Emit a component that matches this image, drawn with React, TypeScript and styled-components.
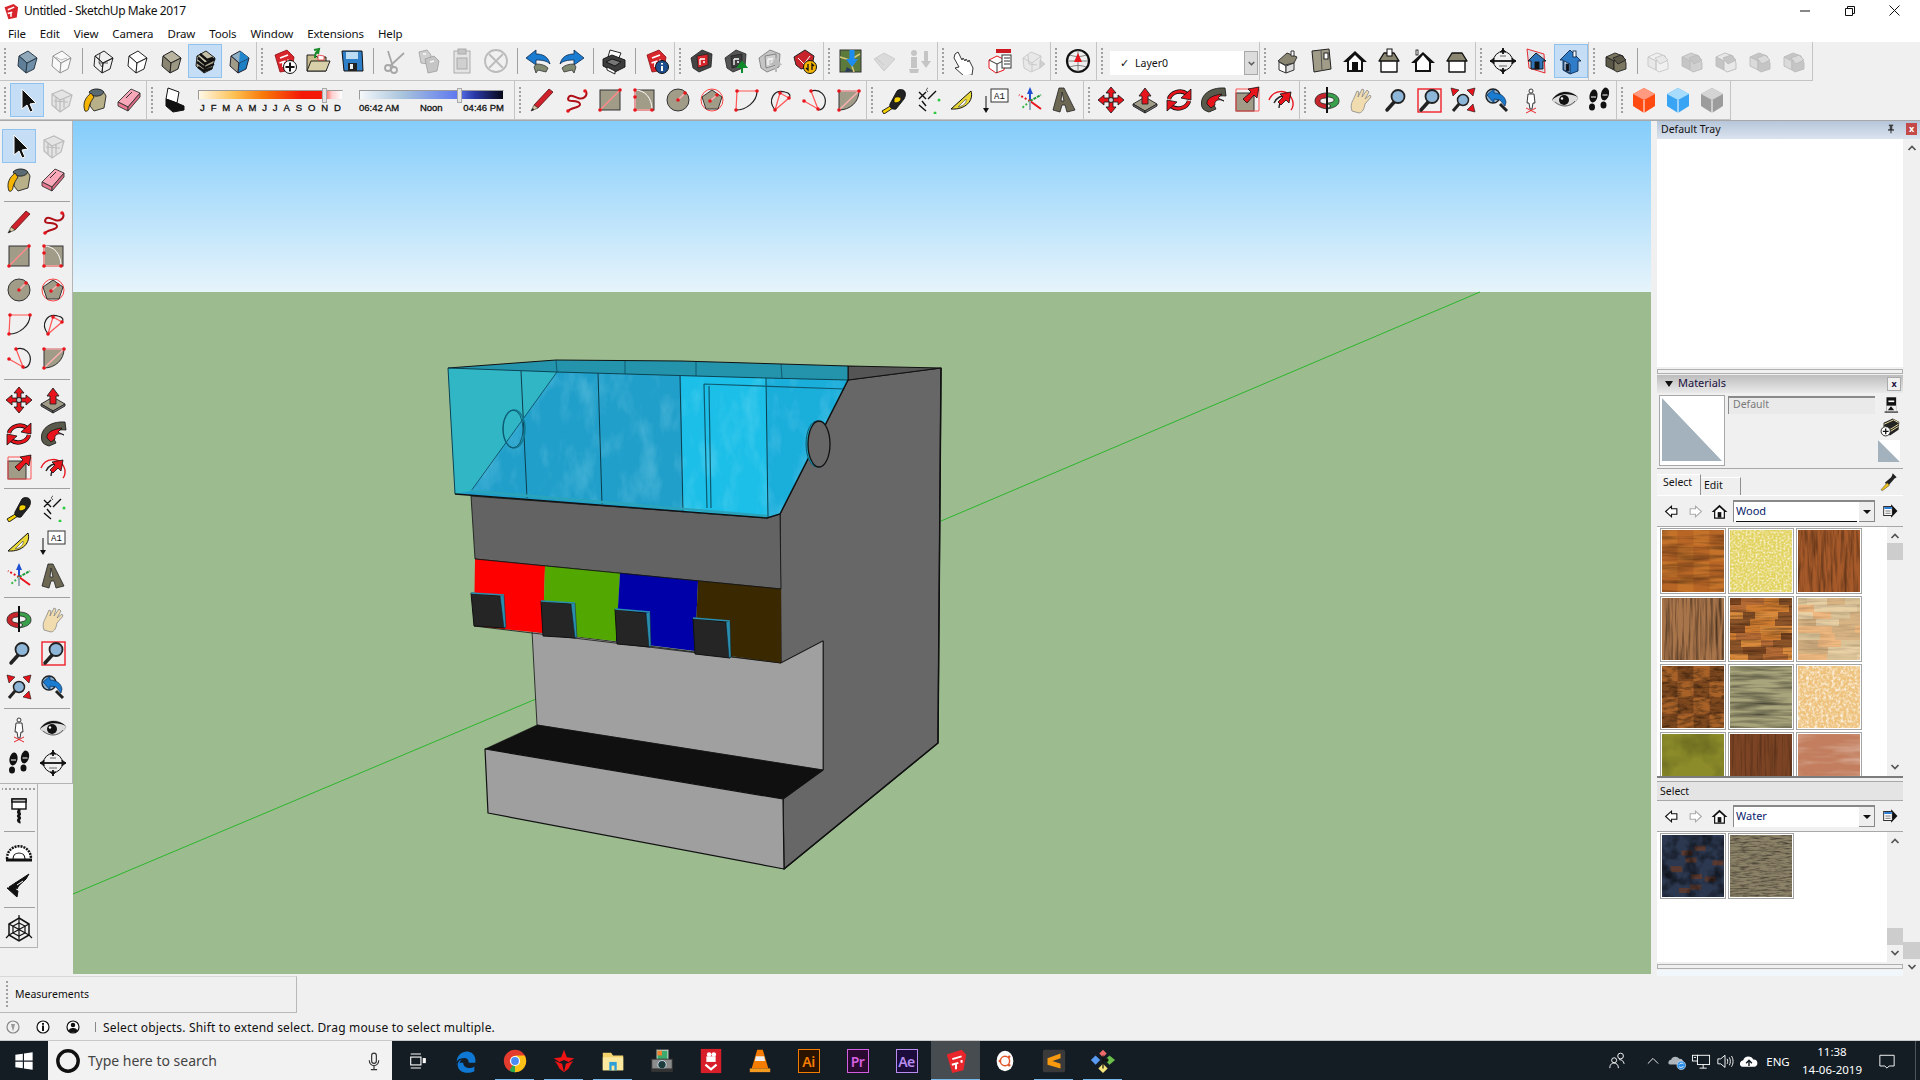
import React, { ReactNode } from 'react'
import styled, { createGlobalStyle } from 'styled-components'

const RED = '#e8141c'
const TAN = '#a09c88'
const UI_FONT = '"Noto Sans", "Open Sans", sans-serif'

const GlobalStyle = createGlobalStyle`
  html, body { margin: 0; padding: 0; background: #f0f0f0; }
  body { font-family: ${UI_FONT}; color: #111; }
  * { box-sizing: border-box; }
`

// drawing helpers
const Dot = ({ x, y }: { x: number; y: number }) => <circle cx={x} cy={y} r="1.8" fill={RED} />

const cube = (t: string, l: string, r: string, s = '#222') => (
  <g stroke={s} strokeWidth="1" strokeLinejoin="round">
    <polygon points="6,9 15,4 24,11 14,16" fill={t} />
    <polygon points="6,9 14,16 13,26 5,19" fill={l} />
    <polygon points="14,16 24,11 21,22 13,26" fill={r} />
  </g>
)

const suPaper = (
  <g>
    <polygon points="5,8 17,3 24,10 22,23 10,25" fill="#d8252c" stroke="#8a0f14" strokeWidth=".8" />
    <path d="M10 11l8-3M9.5 16l6-2M13 15v5M18 12.5v3" stroke="#fff" strokeWidth="1.8" fill="none" />
  </g>
)

const roundBadge = (fill: string, inner: ReactNode) => (
  <g>
    <circle cx="20" cy="20" r="6.5" fill={fill} stroke="#111" strokeWidth="1" />
    {inner}
  </g>
)

const suTool = (a: string, b: string) => (
  <g>
    <polygon points="3,11 14,3 24,7 23,20 11,25 5,21" fill={a} stroke="#222" strokeWidth=".8" />
    <polygon points="9,9 20,7 20,18 10,21" fill={b} stroke="#222" strokeWidth=".8" />
    <path d="M12 12h5M12 12v6M15 15h2" stroke="#fff" strokeWidth="1.3" />
  </g>
)

const houseBody = (wall: string, roof: string) => (
  <g stroke="#111" strokeWidth="1.4" strokeLinejoin="round">
    <polygon points="6,13 22,13 22,25 6,25" fill={wall} />
    <polygon points="4,14 9,6 19,6 24,14" fill={roof} />
  </g>
)

const solidShape = (a: string, b: string, s: string) => (
  <g stroke={s} strokeWidth=".9" strokeLinejoin="round">
    <polygon points="4,10 13,6 21,9 12,14" fill={a} />
    <polygon points="4,10 12,14 12,23 4,19" fill={b} />
    <polygon points="12,14 21,9 24,16 24,22 15,25 12,23" fill={a} />
    <polygon points="11,11 19,8 24,13 16,17" fill={b} />
  </g>
)

const footprint = (
  <g fill="#111">
    <ellipse cx="8.5" cy="10" rx="4" ry="6.5" transform="rotate(10 8.5 10)" />
    <ellipse cx="7" cy="21" rx="3" ry="3.5" />
    <ellipse cx="20" cy="8" rx="4" ry="6.5" transform="rotate(12 20 8)" />
    <ellipse cx="18.5" cy="19" rx="3" ry="3.5" />
    <path d="M6 11h5M17.5 9h5" stroke="#fff" strokeWidth="1" />
  </g>
)

const magnifier = (
  <g>
    <path d="M15 14L6 24" stroke="#222" strokeWidth="3.5" strokeLinecap="round" />
    <circle cx="17" cy="10.5" r="6.5" fill="#8eb6d8" stroke="#222" strokeWidth="1.8" />
  </g>
)

const GLYPHS: Record<string, ReactNode> = {
  iso: cube('#8fa9bb', '#5f7f99', '#6f8fa8', '#2a3a48'),
  xray: (
    <g>
      {cube('#fff', '#fff', '#fff', '#555')}
      <path d="M9 10l5 3 6-2" stroke="#999" fill="none" />
    </g>
  ),
  wire: (
    <g>
      {cube('none', 'none', 'none', '#222')}
      <path d="M11 6l-1 10 3 4M10 16l9 0" stroke="#333" fill="none" strokeWidth=".8" />
    </g>
  ),
  hidden: cube('#fff', '#fff', '#fff'),
  shaded: cube('#b8b4a0', '#8a8672', '#9c9884'),
  tex: (
    <g>
      {cube('#c4c0a8', '#b8b49c', '#a8a48c')}
      <path d="M7 11l7 6 10-5M6 15l8 6 9-4M7 20l6 4 8-3M9 7l7 6 6-2" stroke="#111" strokeWidth="2.4" fill="none" />
    </g>
  ),
  mono: (
    <g>
      {cube('#8fb0c4', '#a09c88', '#1d7fc4', '#223')}
      <polygon points="15,4 24,11 14,16" fill="#2286cc" />
    </g>
  ),
  newdoc: (
    <g>
      {suPaper}
      {roundBadge('#fff', <path d="M20 15.5v9M15.5 20h9" stroke="#111" strokeWidth="2" />)}
    </g>
  ),
  open: (
    <g>
      <path d="M3 8h8l2 2h9v14H3z" fill="#c8bc8c" stroke="#222" />
      <path d="M3 24l4-10h19l-4 10z" fill="#d8d0a8" stroke="#222" />
      <path d="M11 11c0-4 1-6 3-7M10 3l5-1-1 5" stroke="#1a8a2a" strokeWidth="2" fill="none" />
      <path d="M14 8l6 1v4h-6z" fill="#fff" stroke={RED} strokeWidth=".7" />
    </g>
  ),
  save: (
    <g>
      <polygon points="4,4 24,4 25,24 6,24" fill="#2f7fc8" stroke="#111" />
      <rect x="8" y="5" width="12" height="7" fill="#bcdcf4" />
      <rect x="10" y="16" width="9" height="8" fill="#222" />
      <rect x="12" y="17" width="3" height="5" fill="#eee" />
    </g>
  ),
  cut: (
    <g fill="none" stroke="#777" strokeWidth="1.8">
      <circle cx="8" cy="21" r="3" />
      <circle cx="14" cy="23" r="3" />
      <path d="M10 19L24 6M13 20L8 4" />
    </g>
  ),
  copy: (
    <g stroke="#666" strokeWidth=".8">
      <polygon points="5,5 13,3 17,8 15,17 7,16" fill="#bbb" />
      <polygon points="11,12 20,9 25,14 23,24 14,26" fill="#aaa" />
      <path d="M9 7l3 0M16 15l4-1" stroke="#fff" strokeWidth="1.4" />
    </g>
  ),
  paste: (
    <g stroke="#777" strokeWidth=".9">
      <rect x="6" y="4" width="16" height="22" fill="#ddd" />
      <rect x="10" y="2" width="8" height="5" fill="#aaa" />
      <rect x="9" y="11" width="10" height="11" fill="#bbb" />
    </g>
  ),
  erase: (
    <g fill="none" stroke="#999" strokeWidth="1.8">
      <circle cx="14" cy="14" r="11" />
      <path d="M7 7l14 14M21 7L7 21" />
    </g>
  ),
  undo: (
    <g>
      <path d="M2 11L12 3v4c6 0 12 2 14 10-3-3-7-4-14-4v5z" fill="#1a7cd0" stroke="#0a2a50" strokeWidth=".8" />
      <path d="M12 17c5 0 9 1 12 4l-2 4-8-2-2 3-2-6z" fill="#7f8a70" stroke="#333" strokeWidth=".8" />
    </g>
  ),
  redo: (
    <g transform="matrix(-1 0 0 1 28 0)">
      <path d="M2 11L12 3v4c6 0 12 2 14 10-3-3-7-4-14-4v5z" fill="#1a7cd0" stroke="#0a2a50" strokeWidth=".8" />
      <path d="M12 17c5 0 9 1 12 4l-2 4-8-2-2 3-2-6z" fill="#7f8a70" stroke="#333" strokeWidth=".8" />
    </g>
  ),
  print: (
    <g stroke="#111" strokeWidth=".9">
      <polygon points="10,3 21,6 18,13 8,10" fill="#fff" />
      <polygon points="3,12 12,8 25,13 25,20 15,25 3,19" fill="#3c3c3c" />
      <polygon points="6,15 12,12 21,15 15,19" fill="#777" />
      <polygon points="7,20 15,24 15,27 7,23" fill="#fff" />
    </g>
  ),
  model: (
    <g>
      {suPaper}
      {roundBadge('#1d4f8f', <path d="M20 16v1.5M20 19v5" stroke="#fff" strokeWidth="2" />)}
    </g>
  ),
  wh1: suTool('#444', '#d8252c'),
  wh2: (
    <g>
      {suTool('#555', '#3c3c3c')}
      <path d="M20 26v-7M16 20l4-5 4 5z" stroke="#0f8a2a" fill="#0f8a2a" strokeWidth="2" />
    </g>
  ),
  wh3: (
    <g>
      {suTool('#aaa', '#bbb')}
      <path d="M20 25v-9M16 17l4-5 4 5z" stroke="#999" fill="#999" strokeWidth="2" />
    </g>
  ),
  wh4: (
    <g>
      <polygon points="4,10 15,3 24,9 22,19 11,22 6,18" fill="#c8242c" stroke="#222" />
      <path d="M8 11l6 6 6-8" stroke="#fff" fill="none" />
      {roundBadge('#f4b400', <path d="M18 17v6l-2-2M22 23v-6l2 2" stroke="#111" strokeWidth="1.3" fill="none" />)}
    </g>
  ),
  terrain: (
    <g>
      <rect x="3" y="3" width="21" height="22" fill="#5c7a3c" stroke="#333" />
      <path d="M3 10l10 3 4 12M13 13l10-6" stroke="#d8c878" strokeWidth="1.5" fill="none" />
      <path d="M10 20l6 4-8 1z" fill="#2a3a5c" />
      <path d="M15 3v10" stroke="#1d8cf0" strokeWidth="5" />
      <polygon points="9,12 21,12 15,20" fill="#1d8cf0" />
    </g>
  ),
  photo: (
    <g fill="#ccc" stroke="#aaa" strokeWidth=".8">
      <polygon points="3,12 13,6 24,12 13,24" />
      <path d="M5 11l8 7" fill="none" />
    </g>
  ),
  pindown: (
    <g fill="#aaa">
      <circle cx="9" cy="6" r="3" />
      <rect x="6" y="10" width="6" height="11" />
      <polygon points="4,22 14,22 13,26 5,26" />
      <path d="M19 4h4v10h3l-5 7-5-7h3z" />
    </g>
  ),
  handPoint: (
    <path d="M7 5l4 8 1-2 2 3 1-2 2 3 1-2 4 8-1 7-8 1-9-8 4-1-5-9 1-4z" fill="#fff" stroke="#222" strokeWidth=".9" />
  ),
  report: (
    <g>
      <polygon points="4,13 12,9 20,13 19,23 11,26 4,21" fill="#fff" stroke={RED} />
      <path d="M4 13l8 4 8-4M12 17v9" stroke="#333" fill="none" />
      <rect x="11" y="2" width="15" height="4" fill="#cc1a22" />
      <rect x="17" y="8" width="9" height="13" fill="#fff" stroke="#333" />
      <path d="M19 11h6M19 14h6M19 17h6" stroke="#333" />
    </g>
  ),
  reportDim: (
    <g fill="#e4e4e4" stroke="#aaa" strokeWidth=".9">
      <polygon points="4,11 12,5 22,9 21,21 12,25 5,21" />
      <path d="M4 11l9 5 9-7M13 16v9M9 8l1 9 8 1" fill="none" />
      <path d="M21 13l5 4-5 4z" fill="#bbb" />
    </g>
  ),
  globe: (
    <g>
      <circle cx="14" cy="14" r="11" fill="#eee" stroke="#111" strokeWidth="2.2" />
      <path d="M4 14h20M14 3v22M6 8c5 2 11 2 16 0M6 20c5-2 11-2 16 0" stroke="#666" fill="none" strokeWidth=".8" />
      <polygon points="14,6 18,15 10,15" fill={RED} />
    </g>
  ),
  houseIso: (
    <g stroke="#333" strokeWidth="1" strokeLinejoin="round">
      <polygon points="5,14 14,6 24,10 21,16 12,18" fill="#8a8672" />
      <polygon points="6,15 13,19 13,26 6,23" fill="#fff" />
      <polygon points="13,19 21,16 21,23 13,26" fill="#ddd" />
      <rect x="18" y="4" width="3" height="5" fill="#fff" />
    </g>
  ),
  houseTop: (
    <g stroke="#222" strokeWidth="1">
      <polygon points="5,4 22,2 24,22 7,25" fill={TAN} />
      <path d="M14 3l1 21" stroke="#555" />
      <rect x="17" y="6" width="4" height="6" fill="#fff" />
    </g>
  ),
  houseFront: (
    <g>
      <polygon points="14,4 26,15 22,15 22,25 6,25 6,15 2,15" fill="#111" />
      <polygon points="14,8 20,14 20,23 8,23 8,14" fill="#fff" />
      <rect x="11" y="15" width="6" height="8" fill="#111" />
    </g>
  ),
  houseRight: (
    <g>
      {houseBody('#fff', '#8a8672')}
      <rect x="12" y="2" width="5" height="7" fill="#fff" stroke="#111" />
    </g>
  ),
  houseBack: (
    <g>
      <polygon points="14,5 26,16 22,16 22,25 6,25 6,16 2,16" fill="#111" />
      <polygon points="14,8 20,15 20,23 8,23 8,15" fill="#fff" />
      <rect x="7" y="3" width="2" height="5" fill="#fff" stroke="#111" strokeWidth=".8" />
    </g>
  ),
  houseLeft: houseBody('#fff', '#8a8672'),
  views: (
    <g fill="none" stroke="#111">
      <circle cx="14" cy="14" r="9.5" strokeWidth="1" />
      <path d="M1 14h26" strokeWidth="1.8" />
      <path d="M14 1v6M14 21v6" strokeWidth="1.8" />
      <path d="M1 14l4-3v6zM27 14l-4-3v6zM14 2l-3 3h6zM14 26l-3-3h6z" fill="#111" strokeWidth=".6" />
      <path d="M11 9h6M10 19h8" stroke="#666" />
    </g>
  ),
  camPara: (
    <g stroke="#111" strokeWidth=".9">
      <polygon points="4,2 21,7 22,26 6,21" fill="#d8e0e8" stroke={RED} />
      <polygon points="13,6 23,14 20,14 20,22 8,22 8,14 5,14" fill="#2f74b8" />
      <rect x="12" y="15" width="4" height="7" fill="#111" />
    </g>
  ),
  camPersp: (
    <g stroke="#0f2a50" strokeWidth=".9">
      <polygon points="13,3 24,14 21,14 21,24 13,27 6,23 6,13 3,13" fill="#2f7cc8" />
      <polygon points="7,14 13,17 13,26 7,23" fill="#e4eef8" />
      <rect x="9" y="17" width="3" height="7" fill="#111" />
      <rect x="16" y="4" width="3" height="6" fill="#fff" />
    </g>
  ),
  solid: solidShape('#7a7660', '#5c5848', '#222'),
  solidA: solidShape('none', '#e4e4e4', '#aaa'),
  solidB: solidShape('#bbb', '#aaa', '#999'),
  solidC: solidShape('#e4e4e4', '#aaa', '#999'),
  solidD: solidShape('#aaa', '#ccc', '#999'),
  select: <path d="M9 3v20l5-4 3 7 3-1-3-7 6-1z" fill="#111" stroke="#fff" strokeWidth="1" />,
  component: (
    <g fill="none" stroke="#999" strokeWidth="1.2">
      <polygon points="5,8 15,4 25,9 22,20 13,26 5,19" fill="#ddd" />
      <path d="M5 8l8 6 12-5M13 14v12M9 11v11M17 12v10M7 15l14 1" />
    </g>
  ),
  bucket: (
    <g stroke="#222" strokeWidth=".9">
      <path d="M9 8C12 1 22 2 25 10l-2 12-10 3-4-5z" fill="#b8b088" />
      <path d="M8 6c3-4 12-4 15 0-2 5-12 6-15 0z" fill="#5a6a72" />
      <path d="M10 7C5 11 1 17 4 25c2 1 4-1 4-4 1-4 3-7 5-10z" fill="#f4b400" />
    </g>
  ),
  eraser: (
    <g stroke="#333" strokeWidth=".9" strokeLinejoin="round">
      <polygon points="3,16 16,3 25,7 13,21" fill="#f8a8b8" />
      <polygon points="3,16 13,21 13,25 3,20" fill="#ea7890" />
      <polygon points="13,21 25,7 25,11 13,25" fill="#d86880" />
      <path d="M11 12l6-6" stroke="#333" strokeWidth="1" />
    </g>
  ),
  shadow: (
    <g stroke="#111">
      <polygon points="8,2 19,6 17,17 6,13" fill="#fff" />
      <polygon points="6,13 17,17 24,20 24,24 13,26 6,20" fill="#111" />
    </g>
  ),
  pencil: (
    <g>
      <polygon points="21,3 25,6 10,22 6,19" fill="#d0202a" stroke="#511" strokeWidth=".8" />
      <polygon points="6,19 10,22 3,25" fill="#d8c8a0" stroke="#333" strokeWidth=".6" />
      <polygon points="3,25 5,22 6,24" fill="#111" />
    </g>
  ),
  freehand: (
    <g>
      <path d="M24 5c2 5-3 9-8 7-5-2-9-4-10 1 0 4 10 0 12 5 1 4-9 3-12 7" stroke="#b01018" strokeWidth="2" fill="none" />
      <Dot x={23} y={5} />
      <Dot x={6} y={25} />
    </g>
  ),
  rect: (
    <g>
      <rect x="4" y="4" width="20" height="20" fill={TAN} stroke="#333" />
      <path d="M4 24L24 4" stroke="#ff8a8a" strokeWidth="1.4" />
      <Dot x={24} y={4} />
      <Dot x={4} y={24} />
    </g>
  ),
  rotrect: (
    <g>
      <rect x="5" y="4" width="19" height="20" fill={TAN} stroke="#333" />
      <path d="M5 4c10 0 17 8 17 20H5z" fill={TAN} stroke="#fff" strokeWidth="1" />
      <path d="M5 4v20h17" stroke="#ff6a6a" strokeWidth="1" fill="none" />
      <Dot x={5} y={4} />
      <Dot x={5} y={11} />
      <Dot x={5} y={24} />
      <Dot x={22} y={24} />
    </g>
  ),
  circle: (
    <g>
      <circle cx="14" cy="14" r="11" fill={TAN} stroke="#333" />
      <path d="M14 14l7-7" stroke="#ffb0b0" strokeWidth="1.4" />
      <Dot x={14} y={14} />
      <Dot x={21} y={7} />
    </g>
  ),
  polygon: (
    <g>
      <circle cx="14" cy="14" r="11" fill="none" stroke="#f44" />
      <polygon points="14,4 24,11 20,23 8,23 4,11" fill={TAN} stroke="#333" />
      <path d="M12 15l7-6" stroke="#ffb0b0" strokeWidth="1.4" />
      <Dot x={12} y={15} />
      <Dot x={19} y={9} />
    </g>
  ),
  arc: (
    <g fill="none">
      <path d="M4 24L5 5h20" stroke="#f55" strokeWidth="1.2" />
      <path d="M4 24c10 0 21-8 21-19" stroke="#222" strokeWidth="1.2" />
      <Dot x={5} y={5} />
      <Dot x={25} y={5} />
      <Dot x={4} y={24} />
    </g>
  ),
  arc2: (
    <g fill="none">
      <path d="M9 24C1 14 8 3 19 6c5 1 6 4 4 6" stroke="#222" strokeWidth="1.2" />
      <path d="M9 24l5-17M9 24l14-12L14 7" stroke="#f55" strokeWidth="1.2" />
      <Dot x={9} y={24} />
      <Dot x={23} y={12} />
      <Dot x={14} y={7} />
    </g>
  ),
  arc3: (
    <g fill="none">
      <path d="M11 5c9-3 16 5 14 13-1 4-3 6-7 6" stroke="#222" strokeWidth="1.2" />
      <path d="M4 15l14 8L11 5" stroke="#f55" strokeWidth="1.2" />
      <Dot x={4} y={15} />
      <Dot x={18} y={23} />
      <Dot x={11} y={5} />
    </g>
  ),
  pie: (
    <g>
      <path d="M5 5h20C25 16 16 24 5 24z" fill={TAN} stroke="#333" />
      <path d="M5 24L25 5M5 5h20" stroke="#ffb0b0" strokeWidth="1.4" />
      <Dot x={5} y={5} />
      <Dot x={25} y={5} />
      <Dot x={5} y={24} />
    </g>
  ),
  tape: (
    <g stroke="#111" strokeWidth=".9">
      <path d="M2 25l10-6 1 3-9 6z" fill="#f4d000" />
      <path d="M10 18L17 5c2-2 7-2 8 1s0 5-1 7l-8 10c-4 1-7-2-6-5z" fill="#222" />
      <path d="M14 13c1-3 7-3 7 0s-6 5-7 3z" fill="#f4d000" />
    </g>
  ),
  dimension: (
    <g fill="none" stroke="#111" strokeWidth="1.4">
      <path d="M5 6l7 7M5 13l7-7M14 13l8-8M5 19l7 6M8 15l4 5" />
      <path d="M14 6c-2-2-2-3 0-4" strokeWidth=".8" />
      <circle cx="25" cy="14" r="1.5" fill="#2dcc40" stroke="none" />
      <circle cx="21" cy="27" r="1.5" fill="#2dcc40" stroke="none" />
    </g>
  ),
  protractor: (
    <g stroke="#111" strokeWidth="1">
      <path d="M3 23L23 5c3 9-5 19-20 18z" fill="#e8d838" />
      <path d="M10 21l8-8c1 3-2 7-8 8z" fill="#fff" stroke="#555" strokeWidth=".7" />
    </g>
  ),
  textTool: (
    <g>
      <rect x="9" y="3" width="17" height="13" fill="#fff" stroke="#333" />
      <text x="17.5" y="13" fontFamily="Liberation Mono, monospace" fontSize="9" textAnchor="middle" fill="#111">A1</text>
      <path d="M4 10v13" stroke="#111" strokeWidth="1" />
      <polygon points="1,22 7,22 4,27" fill="#111" />
    </g>
  ),
  axes: (
    <g strokeWidth="2" fill="none">
      <path d="M14 15V4" stroke="#1d4fd0" />
      <path d="M14 15l11-6" stroke="#1f9a3a" strokeDasharray="3 1" />
      <path d="M14 15l11 8" stroke={RED} />
      <path d="M14 15l-11-6" stroke={RED} strokeDasharray="2 2" />
      <path d="M14 15l-9 8" stroke="#3cb84c" strokeDasharray="2 2" />
      <path d="M14 15v9" stroke="#9ab" />
      <polygon points="14,1 11,8 17,8" fill="#1d4fd0" />
    </g>
  ),
  text3d: (
    <g stroke="#222" strokeWidth=".8">
      <polygon points="14,2 9,2 3,24 10,26 12,19 15,19 17,26 25,24" fill="#6c6854" />
      <polygon points="12,6 14,15 11,15" fill="#eee" />
    </g>
  ),
  move: (
    <g fill={RED} stroke="#111" strokeWidth=".8">
      <polygon points="14,1 19,7 16,7 16,12 12,12 12,7 9,7" />
      <polygon points="14,27 19,21 16,21 16,16 12,16 12,21 9,21" />
      <polygon points="1,14 7,9 7,12 12,12 12,16 7,16 7,19" />
      <polygon points="27,14 21,9 21,12 16,12 16,16 21,16 21,19" />
      <circle cx="14" cy="14" r="2.5" fill="#ccc" />
    </g>
  ),
  push: (
    <g stroke="#222" strokeWidth=".9" strokeLinejoin="round">
      <polygon points="2,18 14,11 26,18 14,25" fill={TAN} />
      <polygon points="2,18 14,25 14,27 2,20" fill="#666" />
      <polygon points="14,25 26,18 26,20 14,27" fill="#777" />
      <polygon points="14,2 20,10 17,10 17,18 11,18 11,10 8,10" fill={RED} />
    </g>
  ),
  rotate: (
    <g fill="none">
      <path d="M4 13C6 6 16 3 22 8" stroke="#111" strokeWidth="4.4" />
      <path d="M4 13C6 6 16 3 22 8" stroke={RED} strokeWidth="2.8" />
      <path d="M24 15c-2 7-12 10-18 5" stroke="#111" strokeWidth="4.4" />
      <path d="M24 15c-2 7-12 10-18 5" stroke={RED} strokeWidth="2.8" />
      <polygon points="26,3 26,14 16,12" fill={RED} stroke="#111" strokeWidth=".8" />
      <polygon points="2,25 2,14 12,16" fill={RED} stroke="#111" strokeWidth=".8" />
    </g>
  ),
  follow: (
    <g stroke="#111" strokeWidth=".8">
      <path d="M3 21C0 10 10 1 26 2l1 8c-8-1-14 2-13 7l3 6-7 3c-3-1-6-2-7-5z" fill="#5a5a4c" />
      <path d="M8 18c-1-6 7-9 15-10l-4 4 6 3c-6-3-10 0-9 4l-4 3z" fill={RED} />
    </g>
  ),
  scale: (
    <g>
      <rect x="3" y="7" width="18" height="18" fill={TAN} stroke="#333" />
      <path d="M3 3h23v22H3z" fill="none" stroke="#f55" strokeWidth="1" />
      <polygon points="26,1 24,12 21,9 14,17 10,13 18,6 15,3" fill={RED} stroke="#111" strokeWidth=".8" />
    </g>
  ),
  offset: (
    <g fill="none">
      <path d="M2 14C6 4 20 2 25 13c2 4 1 9-1 11" stroke={RED} strokeWidth="1.4" />
      <path d="M7 17c3-6 8-8 11-6" stroke="#222" strokeWidth="1.4" />
      <path d="M12 22c0-4 2-6 4-7" stroke="#222" strokeWidth="1.4" />
      <polygon points="24,6 22,17 19,14 14,19 11,16 16,11 13,8" fill={RED} stroke="#111" strokeWidth=".8" />
    </g>
  ),
  orbit: (
    <g stroke="#222" strokeWidth=".8">
      <path d="M14 7C7 7 2 10 2 15s6 7 12 8v-5c-4 0-7-1-7-3s2-3 7-3z" fill="#c8242c" />
      <path d="M14 7c7 0 12 3 12 8s-6 7-12 8l4-3-4-3c4 0 7-1 7-3s-3-3-7-3z" fill="#3aa04c" />
      <path d="M14 1v26" stroke="#111" strokeWidth="2" />
    </g>
  ),
  pan: (
    <path d="M5 25c-2-6 0-9 2-13l3-7 2 1-1 5 4-8 2 1-2 7 5-7 2 2-4 7 5-4 1 2-6 7c-1 5-2 8-6 9z" fill="#f0dcae" stroke="#888" strokeWidth=".8" />
  ),
  zoom: magnifier,
  zoomWin: (
    <g>
      <rect x="3" y="3" width="23" height="23" fill="none" stroke="#ee2028" strokeWidth="1.4" />
      {magnifier}
    </g>
  ),
  zoomExt: (
    <g>
      <path d="M10 18l-6 7" stroke="#222" strokeWidth="3" />
      <circle cx="14" cy="14" r="5.5" fill="#8eb6d8" stroke="#222" strokeWidth="1.5" />
      <g fill={RED} stroke="#111" strokeWidth=".6">
        <polygon points="2,2 10,4 4,10" />
        <polygon points="26,2 24,10 18,4" />
        <polygon points="26,26 18,24 24,18" />
      </g>
    </g>
  ),
  zoomPrev: (
    <g>
      <path d="M17 18l7 7" stroke="#222" strokeWidth="3" />
      <circle cx="10" cy="10" r="7" fill="#8eb6d8" stroke="#222" strokeWidth="1.4" />
      <path d="M4 9l7-6v4c6 0 11 3 12 9l-1 4-5-6-6-1v4z" fill="#1a7cd0" stroke="#0a2a50" strokeWidth=".7" />
    </g>
  ),
  person: (
    <g stroke="#222" strokeWidth=".9" fill="#fff">
      <circle cx="14" cy="5" r="2" />
      <path d="M11 8h6l1 9h-2l-1 6h-2l-1-6h-2z" />
      <path d="M9 27l10-5M19 27L9 22" stroke={RED} />
    </g>
  ),
  eye: (
    <g>
      <path d="M1 14C7 4 20 3 27 12c-4 9-17 11-26 2z" fill="#ddd" stroke="#888" strokeWidth=".5" />
      <path d="M1 14C7 4 19 4 27 11c-8-3-16-5-26 3z" fill="#111" />
      <circle cx="13" cy="14" r="5" fill="#111" />
      <circle cx="11" cy="12.5" r="1.2" fill="#fff" />
      <path d="M4 16c6 5 14 6 20-1" stroke="#666" fill="none" />
    </g>
  ),
  walk: footprint,
  cubeRed: (
    <g>
      <polygon points="14,2 25,8 25,20 14,27 3,20 3,8" fill="#ff4a12" />
      <polygon points="14,2 25,8 14,14 3,8" fill="#ff9a80" />
      <path d="M14 14v13" stroke="#fff" strokeWidth="1" />
    </g>
  ),
  cubeBlue: (
    <g>
      <polygon points="14,2 25,8 25,20 14,27 3,20 3,8" fill="#3aa4f4" />
      <polygon points="14,2 25,8 14,14 3,8" fill="#a8dcfc" />
      <path d="M14 14v13" stroke="#fff" strokeWidth="1" />
    </g>
  ),
  cubeGray: (
    <g>
      <polygon points="14,2 25,8 25,20 14,27 3,20 3,8" fill="#9c9c9c" />
      <polygon points="14,2 25,8 14,14 3,8" fill="#d4d4d4" />
      <path d="M14 14v13" stroke="#fff" strokeWidth="1" />
    </g>
  ),
  sandbox: (
    <g stroke="#111" fill="#fff" strokeWidth="1.4">
      <rect x="7" y="2" width="14" height="10" />
      <rect x="7" y="2" width="14" height="3" fill="#bbb" />
      <path d="M14 12v2c-2 2 2 2 0 4s2 2 0 4 1 2 0 4" fill="none" strokeWidth="3" />
    </g>
  ),
  protractorBlack: (
    <g fill="none" stroke="#111">
      <path d="M2 22C2 5 26 5 26 22" fill="#fff" strokeWidth="2.5" strokeDasharray="2 1" />
      <path d="M8 22c0-8 12-8 12 0" strokeWidth="1.2" />
      <path d="M1 23h26" strokeWidth="3" />
    </g>
  ),
  caliper: (
    <g stroke="#111" fill="#111">
      <path d="M4 16l20-13-3 5-13 12z" />
      <path d="M2 17l10 9 1-6-5-3zM10 12l2 6 3-6z" />
      <path d="M12 14l6-4" stroke="#fff" strokeWidth="1" />
    </g>
  ),
  web: (
    <g fill="none" stroke="#111" strokeWidth="1.2">
      <polygon points="14,3 24,9 24,20 14,26 4,20 4,9" strokeWidth="1.5" />
      <polygon points="14,8 20,11 20,18 14,21 8,18 8,11" />
      <path d="M14 3v23M4 9l20 11M24 9L4 20M14 0v3M1 23l3-3M27 23l-3-3" />
    </g>
  ),
  eyedropper: (
    <g>
      <path d="M20 3l5 5-3 2-1 1-7 8-4-4 8-7 1-2z" fill="#222" />
      <path d="M13 15l3 3-9 7-2-1z" fill="#f0c020" stroke="#333" strokeWidth=".6" />
    </g>
  ),
  navBack: <polygon points="3,14 14,4 14,9 24,9 24,19 14,19 14,24" fill="#fff" stroke="#111" strokeWidth="2" />,
  navNext: <polygon points="25,14 14,4 14,9 4,9 4,19 14,19 14,24" fill="#fff" stroke="#aaa" strokeWidth="2" />,
  navHome: (
    <g>
      <polygon points="14,3 27,15 23,15 23,26 5,26 5,15 1,15" fill="#111" />
      <polygon points="14,7 21,13 21,24 7,24 7,13" fill="#fff" />
      <rect x="11" y="15" width="6" height="9" fill="#111" />
    </g>
  ),
  details: (
    <g>
      <polygon points="16,2 27,14 16,26" fill="#111" />
      <rect x="3" y="6" width="15" height="16" fill="#fff" stroke="#111" strokeWidth="1.5" />
      <rect x="4" y="7" width="13" height="3.5" fill="#2f7fd8" />
      <path d="M6 14h9M6 18h9" stroke="#333" strokeWidth="1.2" />
    </g>
  ),
  materialCol: (
    <g>
      <rect x="7" y="2" width="15" height="23" fill="#111" />
      <rect x="10" y="7" width="9" height="2.5" fill="#fff" />
      <path d="M7 15h15v10H7z" fill="#eee" />
      <polygon points="14,16 19,22 9,22" fill="#111" />
      <rect x="4" y="24" width="21" height="2" fill="#333" />
    </g>
  ),
  materialAdd: (
    <g>
      <polygon points="5,8 18,2 27,7 26,18 14,26 5,20" fill="#222" />
      <path d="M6 10l13-6 7 4M6 13l9 4 11-7M6 16l9 4 11-7" stroke="#e8dca0" strokeWidth="1.4" fill="none" />
      <circle cx="8" cy="20" r="6.5" fill="#fff" stroke="#111" strokeWidth="1.2" />
      <path d="M8 16v8M4 20h8" stroke="#111" strokeWidth="1.8" />
    </g>
  ),
  statusPin: (
    <g>
      <circle cx="14" cy="14" r="12" fill="none" stroke="#888" strokeWidth="2.4" />
      <path d="M10 8h8l-2 8-2 7-2-7z" fill="#999" />
    </g>
  ),
  statusInfo: (
    <g>
      <circle cx="14" cy="14" r="12" fill="#fff" stroke="#111" strokeWidth="2.4" />
      <rect x="12" y="6" width="4" height="3.5" fill="#111" />
      <rect x="12" y="11" width="4" height="11" fill="#111" />
    </g>
  ),
  statusUser: (
    <g>
      <circle cx="14" cy="14" r="12" fill="#fff" stroke="#111" strokeWidth="2.4" />
      <circle cx="14" cy="10" r="4.5" fill="#111" />
      <path d="M5 23c1-6 5-7 9-7s8 1 9 7c-5 3-13 3-18 0z" fill="#111" />
    </g>
  ),
  windows: (
    <g fill="#fff">
      <polygon points="3,6 12.5,4.7 12.5,13.5 3,13.5" />
      <polygon points="14,4.5 25,3 25,13.5 14,13.5" />
      <polygon points="3,15 12.5,15 12.5,23.3 3,22" />
      <polygon points="14,15 25,15 25,25 14,23.5" />
    </g>
  ),
  cortana: <circle cx="14" cy="14" r="9.5" fill="none" stroke="#111" strokeWidth="3.2" />,
  mic: (
    <g fill="none" stroke="#333" strokeWidth="1.5">
      <rect x="11" y="4" width="6" height="13" rx="3" />
      <path d="M8 13c0 9 12 9 12 0M14 20v5M10 25h8" />
    </g>
  ),
  taskView: (
    <g fill="none" stroke="#fff" strokeWidth="1.4">
      <rect x="6" y="9" width="13" height="10" />
      <path d="M6 5h13M6 23h13" />
      <rect x="22" y="11" width="2.5" height="5" fill="#fff" />
    </g>
  ),
  edge: (
    <path d="M4 15C4 7 11 3 17 4c5 1 8 6 7 12H11c0 6 8 7 12 4v5c-8 4-18 1-18-7 0-3 2-5 5-6-2 1-2 2-3 4h10c0-4-3-6-6-5-5 0-8 3-7 8z" fill="#0f78d4" />
  ),
  chrome: (
    <g>
      <circle cx="14" cy="14" r="12" fill="#e33b2e" />
      <path d="M14 14L24.4 20A12 12 0 0 1 8 24.4z" fill="#2da94f" />
      <path d="M14 14V26A12 12 0 0 0 24.4 8H14z" fill="#fbc116" />
      <circle cx="14" cy="14" r="5.5" fill="#fff" />
      <circle cx="14" cy="14" r="4.2" fill="#4a8af4" />
    </g>
  ),
  redStar: (
    <g fill="#f01414">
      <polygon points="14,2 17,10 25,11 19,15 14,13 9,15 3,11 11,10" />
      <polygon points="4,14 12,17 14,26 9,22 7,18" />
      <polygon points="24,14 16,17 14,26 19,22 21,18" />
    </g>
  ),
  explorer: (
    <g>
      <path d="M3 5h9l2 3h11v16H3z" fill="#f4d26c" />
      <rect x="3" y="10" width="22" height="14" fill="#fbe9a0" />
      <rect x="10" y="15" width="8" height="9" fill="#2da0d8" />
      <rect x="12.5" y="19" width="3" height="5" fill="#fbe9a0" />
    </g>
  ),
  scanner: (
    <g>
      <rect x="8" y="2" width="13" height="12" fill="#fff" stroke="#666" />
      <rect x="9" y="3" width="11" height="9" fill="#3caa6c" />
      <rect x="9" y="3" width="5" height="5" fill="#f08030" />
      <rect x="3" y="12" width="22" height="13" fill="#8c8c8c" stroke="#333" />
      <circle cx="14" cy="18" r="4.5" fill="#1c3c3c" stroke="#cde" />
      <rect x="3" y="22" width="22" height="3" fill="#333" />
    </g>
  ),
  videoRed: (
    <g>
      <rect x="3" y="1" width="22" height="26" fill="#d81e28" />
      <circle cx="12" cy="7" r="2.5" fill="#fff" />
      <circle cx="17" cy="7" r="2.5" fill="#fff" />
      <rect x="9" y="9" width="10" height="6" fill="#fff" />
      <path d="M8 18l6 5 6-5" stroke="#fff" strokeWidth="2.4" fill="none" />
    </g>
  ),
  vlc: (
    <g>
      <polygon points="11,2 17,2 23,22 5,22" fill="#f47c00" />
      <polygon points="9.5,9 18.5,9 19.5,14 8.5,14" fill="#eee" />
      <rect x="3" y="22" width="22" height="4" fill="#f49a20" />
    </g>
  ),
  sketchTask: (
    <g>
      <polygon points="4,7 20,2 25,7 22,24 10,27" fill="#e8262c" />
      <path d="M10 12l10-3M9.5 18l7-2M14 17v6M20 13v3" stroke="#fff" strokeWidth="2.2" fill="none" />
    </g>
  ),
  ubuntu: (
    <g>
      <ellipse cx="14" cy="14" rx="9" ry="11" fill="#fff" />
      <circle cx="14" cy="14" r="5" fill="none" stroke="#e2552b" strokeWidth="1.6" />
      <circle cx="18.5" cy="9.5" r="1.4" fill="#e2552b" />
      <circle cx="8.5" cy="14" r="1.4" fill="#e2552b" />
      <circle cx="18.5" cy="18.5" r="1.4" fill="#e2552b" />
    </g>
  ),
  sublime: (
    <g>
      <rect x="2" y="2" width="24" height="24" rx="2" fill="#3a3a3a" />
      <path d="M7 11l14-5v5L7 16zM7 12l14 5v5L7 18z" fill="#f89a0f" />
    </g>
  ),
  gitApp: (
    <g>
      <polygon points="14,2 18,6 14,10 10,6" fill="#f06a6a" />
      <polygon points="6,8 11,13 6,18 1,13" fill="#5a9cf4" />
      <polygon points="21,8 27,13 21,18 16,13" fill="#6ac04a" />
      <polygon points="14,17 19,22 14,27 9,22" fill="#f4e27a" />
      <circle cx="18" cy="13" r="2" fill="#111" />
      <path d="M14 8v14M14 13h4" stroke="#111" strokeWidth="1.3" />
    </g>
  ),
  people: (
    <g fill="none" stroke="#fff" strokeWidth="1.3">
      <circle cx="19" cy="7" r="4" />
      <circle cx="10" cy="13" r="3.5" />
      <path d="M4 24c0-6 3-7 6-7s6 2 6 7M17 12c4 0 6 2 7 6" />
    </g>
  ),
  caretUp: <path d="M6 18l8-8 8 8" fill="none" stroke="#fff" strokeWidth="1.4" />,
  cloudSync: (
    <g>
      <path d="M4 19c-3 0-3-6 2-7 1-5 9-5 11-1 5-1 7 4 4 8z" fill="#aeb6bc" />
      <circle cx="20" cy="20" r="6" fill="#2a8ee8" stroke="#fff" strokeWidth=".8" />
      <path d="M17 19c1-2 4-3 6-1M23 21c-1 2-4 3-6 1" stroke="#fff" fill="none" strokeWidth="1.2" />
    </g>
  ),
  network: (
    <g fill="none" stroke="#fff" strokeWidth="1.3">
      <rect x="9" y="6" width="17" height="13" />
      <rect x="2" y="6" width="7" height="8" fill="#141d24" />
      <path d="M17 19v5M12 24h10M4 9h3" />
    </g>
  ),
  volume: (
    <g fill="none" stroke="#fff" strokeWidth="1.3">
      <path d="M4 11h4l6-5v17l-6-5H4z" />
      <path d="M17 11c1 2 1 5 0 7M20 9c2 3 2 8 0 11M23 7c3 4 3 11 0 15" />
    </g>
  ),
  cloudUp: (
    <g>
      <path d="M5 22c-5 0-5-8 1-9 1-7 12-7 14-1 7-1 8 10 1 10z" fill="#fff" />
      <path d="M14 21v-7M10 17l4-4 4 4" stroke="#141d24" strokeWidth="2" fill="none" />
    </g>
  ),
  notify: <path d="M4 6h20v15h-7l-3 3-3-3H4z" fill="none" stroke="#fff" strokeWidth="1.3" />,
  pin: (
    <g fill="#111">
      <rect x="9" y="4" width="10" height="2.5" />
      <rect x="11" y="6" width="6" height="10" fill="#444" />
      <rect x="7" y="15" width="14" height="2.5" />
      <rect x="13" y="17" width="2" height="7" />
    </g>
  ),
  appMark: (
    <g>
      <polygon points="4,8 18,3 25,8 23,24 10,27" fill="#d8252c" />
      <path d="M9 12l10-4M9 18l7-2M14 17v6" stroke="#fff" strokeWidth="2.4" fill="none" />
    </g>
  ),
  chevUp: <path d="M7 18l7-7 7 7" fill="none" stroke="#555" strokeWidth="3.5" />,
  chevDown: <path d="M7 10l7 7 7-7" fill="none" stroke="#555" strokeWidth="3.5" />,
}

const FADED = new Set(['solidA', 'solidB', 'solidC', 'solidD', 'photo', 'pindown', 'reportDim', 'wh3', 'cut', 'copy', 'paste', 'erase', 'xray', 'component'])

const IconSvg = styled.svg<{ $faded?: boolean }>`
  display: block;
  flex: none;
  opacity: ${(p) => (p.$faded ? 0.6 : 1)};
`

const Icon = ({ name, size = 28 }: { name: string; size?: number }) => (
  <IconSvg viewBox="0 0 28 28" width={size} height={size} $faded={FADED.has(name)}>
    {GLYPHS[name]}
  </IconSvg>
)

// window chrome
const Page = styled.div`
  width: 1920px;
  height: 1080px;
  overflow: hidden;
  display: flex;
  flex-direction: column;
  background: #f0f0f0;
`

const TitleBar = styled.div`
  height: 26px;
  flex: none;
  display: flex;
  align-items: flex-start;
  padding: 2px 3px 0 2px;
  background: #fff;
`

const WindowTitle = styled.div`
  margin-left: 4px;
  font-size: 12px;
  line-height: 17px;
  letter-spacing: -0.4px;
  color: #111;
`

const WindowButtons = styled.div`
  margin-left: auto;
  display: flex;
  margin-top: -2px;
`

const WindowBtn = styled.div`
  width: 45px;
  height: 21px;
  display: flex;
  align-items: center;
  justify-content: center;
`

const MenuBar = styled.div`
  height: 16px;
  flex: none;
  display: flex;
  align-items: flex-start;
  padding-left: 1px;
  background: #fff;
`

const MenuItem = styled.div`
  padding: 0 7px;
  font-size: 11.5px;
  line-height: 15px;
  letter-spacing: -0.15px;
  color: #111;
`

const ToolRow = styled.div`
  height: 39px;
  flex: none;
  display: flex;
`

const ToolRowGap = styled.div`
  height: 1px;
  flex: none;
  background: #a8a8a8;
`

const Toolbar = styled.div<{ $w: number }>`
  width: ${(p) => p.$w}px;
  flex: none;
  display: flex;
  align-items: center;
  border-right: 1px solid #c4c4c4;
  border-bottom: 1px solid #c4c4c4;
  background: #f0f0f0;
`

const Gripper = styled.div`
  width: 4px;
  height: 28px;
  margin: 0 3px;
  flex: none;
  background: radial-gradient(circle, #a0a0a0 0.8px, transparent 1px) 0 0 / 4px 4px;
`

const ToolBtn = styled.div<{ $on?: boolean }>`
  width: 34px;
  height: 34px;
  flex: none;
  display: flex;
  align-items: center;
  justify-content: center;
  background: ${(p) => (p.$on ? '#c6def5' : 'transparent')};
  border: 1px solid ${(p) => (p.$on ? '#8fc2ee' : 'transparent')};
`

const ToolSep = styled.div`
  width: 8px;
  height: 26px;
  flex: none;
  display: flex;
  justify-content: center;

  &::after {
    content: '';
    width: 1px;
    background: #a0a0a0;
  }
`

// layer picker
const LayerCombo = styled.div`
  width: 148px;
  height: 24px;
  margin: 4px 0 0 3px;
  display: flex;
  background: #fff;
`

const LayerText = styled.div`
  flex: 1;
  display: flex;
  align-items: center;
  gap: 6px;
  padding-left: 10px;
  font-size: 10.5px;
`

const LayerArrow = styled.div`
  width: 14px;
  display: flex;
  align-items: center;
  justify-content: center;
  background: #dcdcdc;
  border: 1px solid #a8a8a8;
`

// shadow sliders
const SunSlider = styled.div<{ $left: number }>`
  width: 145px;
  margin-left: ${(p) => p.$left}px;
  padding-top: 2px;
`

const SliderBar = styled.div<{ $bg: string }>`
  height: 10px;
  position: relative;
  background: ${(p) => p.$bg};
  border: 1px solid #9a9a9a;
  border-right-color: #eee;
  border-bottom-color: #eee;
`

const SliderThumb = styled.div<{ $at: number }>`
  position: absolute;
  left: ${(p) => p.$at}px;
  top: -3px;
  width: 5px;
  height: 15px;
  background: #e4e4e4;
  border: 1px solid #aaa;
`

const SliderLabels = styled.div`
  display: flex;
  justify-content: space-between;
  padding: 3px 2px 0;
  font-family: "Liberation Sans", Arial, sans-serif;
  font-size: 9.5px;
  line-height: 10px;
  color: #111;
  -webkit-text-stroke: 0.3px #111;
`

const SliderTimes = styled(SliderLabels)`
  padding: 3px 0 0;
`

// main area
const Main = styled.div`
  height: 855px;
  flex: none;
  display: flex;
`

const LeftDock = styled.div`
  width: 73px;
  flex: none;
  background: #f0f0f0;
`

const PaletteMain = styled.div`
  width: 73px;
  height: 663px;
  padding: 8px 0 0 2px;
  border-right: 1px solid #b4b4b4;
  border-bottom: 1px solid #b4b4b4;
`

const PaletteSide = styled.div`
  width: 38px;
  height: 164px;
  padding-left: 2px;
  border-right: 1px solid #b4b4b4;
  border-bottom: 1px solid #b4b4b4;
`

const SideGripper = styled.div`
  height: 10px;
  background: radial-gradient(circle, #a0a0a0 0.8px, transparent 1px) 2px 3px / 4px 4px repeat-x;
`

const PaletteGrid = styled.div`
  display: grid;
  grid-template-columns: repeat(2, 34px);
`

const PaletteSep = styled.div<{ $h?: number }>`
  height: ${(p) => p.$h ?? 8}px;
  display: flex;
  align-items: center;
  padding: 0 2px;

  &::after {
    content: '';
    flex: 1;
    height: 1px;
    background: #a0a0a0;
  }
`

const SidePalette = styled.div`
  display: flex;
  flex-direction: column;
`

const Viewport = styled.div`
  flex: 1;
  position: relative;
  display: flex;
  flex-direction: column;
  margin-bottom: 2px;
`

const Sky = styled.div`
  height: 171px;
  flex: none;
  background: linear-gradient(#84cdfb, #e6f4fb);
`

const Ground = styled.div`
  flex: 1;
  background: #9cbc90;
`

const SceneSvg = styled.svg`
  position: absolute;
  inset: 0;
  width: 100%;
  height: 100%;
`

// right tray
const RightDock = styled.div`
  width: 269px;
  flex: none;
  padding-left: 6px;
  display: flex;
  flex-direction: column;
`

const TrayHeader = styled.div`
  height: 18px;
  flex: none;
  display: flex;
  align-items: center;
  padding: 0 3px 2px 4px;
  font-size: 10.5px;
  color: #111;
  background: linear-gradient(#b6c6da, #dbe3ee);
`

const TrayHeaderSpacer = styled.div`
  flex: 1;
`

const TrayClose = styled.div`
  width: 11px;
  height: 12px;
  margin-left: 9px;
  background: #c44a4a;
  color: #fff;
  font-size: 9px;
  font-weight: 700;
  line-height: 12px;
  text-align: center;
`

const TrayBody = styled.div`
  flex: 1;
  display: flex;
`

const TrayColumn = styled.div`
  width: 246px;
  flex: none;
  display: flex;
  flex-direction: column;
`

const TrayBlank = styled.div`
  height: 228px;
  flex: none;
  background: #fff;
`

const CollapsedBar = styled.div`
  height: 5px;
  margin: 2px 0 1px;
  flex: none;
  border: 1px solid #b0b0b0;
  background: #f0f0f0;
`

const PanelHeader = styled.div`
  height: 18px;
  flex: none;
  display: flex;
  align-items: center;
  gap: 5px;
  padding: 0 2px 0 8px;
  font-size: 11px;
  line-height: 14px;
  color: #1a1040;
  background: linear-gradient(#bdbdbd, #eaeaea);
`

const HeaderLabel = styled.span`
  margin-top: -3px;
`

const HeaderTriangle = styled.div`
  width: 0;
  height: 0;
  border-left: 4px solid transparent;
  border-right: 4px solid transparent;
  border-top: 6px solid #111;
`

const HeaderClose = styled.div`
  width: 14px;
  height: 14px;
  margin-left: auto;
  background: #f0f0f0;
  border: 1px solid #aaa;
  font-size: 9px;
  font-weight: 700;
  line-height: 12px;
  text-align: center;
`

const MaterialInfo = styled.div`
  height: 76px;
  flex: none;
  display: flex;
  padding: 2px 3px 0 2px;
  border-bottom: 1px solid #a8a8a8;
`

const PreviewBox = styled.div`
  width: 66px;
  height: 71px;
  flex: none;
  padding: 2px 2px 4px;
  border: 1px solid #a8a8a8;
  background: #fff;
`

const PreviewFace = styled.div`
  width: 100%;
  height: 100%;
  background: linear-gradient(to top right, #a3b2bc 49.6%, #fff 50.4%);
`

const NameField = styled.div`
  width: 147px;
  height: 18px;
  margin: 1px 0 0 3px;
  padding-left: 4px;
  flex: none;
  font-size: 10.5px;
  line-height: 13px;
  color: #7a7a7a;
  background: #eaeaea;
  border-top: 2px solid #8a8a8a;
  border-left: 1px solid #8a8a8a;
`

const InfoActions = styled.div`
  flex: 1;
  display: flex;
  flex-direction: column;
  align-items: flex-end;
  gap: 3px;
  padding-top: 1px;
`

const MiniPreview = styled.div`
  width: 22px;
  height: 22px;
  background: linear-gradient(to top right, #a3b2bc 49.6%, #fff 50.4%);
`

const TabRow = styled.div`
  height: 27px;
  flex: none;
  display: flex;
  align-items: flex-end;
  padding-right: 4px;
  border-bottom: 1px solid #fff;
`

const Tab = styled.div<{ $on?: boolean }>`
  width: ${(p) => (p.$on ? 44 : 40)}px;
  height: ${(p) => (p.$on ? 21 : 18)}px;
  padding-left: ${(p) => (p.$on ? 6 : 3)}px;
  font-size: 10.5px;
  line-height: 15px;
  background: ${(p) => (p.$on ? '#f4f4f4' : '#efefef')};
  border-top: 1px solid #fff;
  border-right: 1.5px solid #909090;
`

const TabEnd = styled.div`
  margin-left: auto;
  margin-bottom: 1px;
  align-self: center;
`

const NavRow = styled.div<{ $h: number }>`
  height: ${(p) => p.$h}px;
  flex: none;
  display: flex;
  align-items: center;
  padding: 0 5px 0 2px;
  border-bottom: 1px solid #a8a8a8;
`

const NavBtn = styled.div`
  width: 24px;
  display: flex;
  justify-content: center;
`

const NavCombo = styled.div`
  width: 142px;
  height: 22px;
  margin: 0 7px 0 2px;
  display: flex;
  background: #fff;
  border-top: 2px solid #888;
  border-left: 1px solid #888;
`

const NavComboText = styled.div<{ $rule?: boolean }>`
  flex: 1;
  margin: 0 2px;
  font-size: 11px;
  line-height: 17px;
  color: #0a246a;
  border-bottom: ${(p) => (p.$rule ? '1px solid #111' : 'none')};
`

const NavComboArrow = styled.div`
  width: 16px;
  display: flex;
  align-items: center;
  justify-content: center;
  background: #eee;
  border-right: 1px solid #888;
  border-bottom: 1px solid #888;

  &::after {
    content: '';
    border-left: 4px solid transparent;
    border-right: 4px solid transparent;
    border-top: 4px solid #111;
  }
`

const SwatchPane = styled.div<{ $h: number }>`
  height: ${(p) => p.$h}px;
  flex: none;
  display: flex;
  background: #fff;
  overflow: hidden;
`

const SwatchGrid = styled.div`
  width: 230px;
  flex: none;
  padding: 1px 0 0 3px;
  display: grid;
  grid-template-columns: repeat(3, 66px);
  grid-auto-rows: 66px;
  gap: 2px;
`

const SwatchFrame = styled.div`
  padding: 1px;
  border: 1px solid #a4a4a4;
  background: #fff;
`

const ScrollTrack = styled.div<{ $thumb: number; $w: number }>`
  width: ${(p) => p.$w}px;
  flex: none;
  position: relative;
  display: flex;
  flex-direction: column;
  justify-content: space-between;
  align-items: center;
  padding: 2px 0;
  background: #f0f0f0;

  &::after {
    content: '';
    position: absolute;
    left: 0;
    right: 0;
    top: ${(p) => p.$thumb}px;
    height: 17px;
    background: #cdcdcd;
  }
`

const RuleThick = styled.div`
  height: 5px;
  flex: none;
  border-top: 2px solid #7c7c7c;
`

const SelectHeader = styled.div`
  height: 20px;
  flex: none;
  padding-left: 3px;
  font-size: 10.5px;
  line-height: 18px;
  background: #e4e4e4;
  border-top: 1px solid #a8a8a8;
  border-bottom: 1px solid #a8a8a8;
`

const TrayFoot = styled.div`
  flex: 1;
  background: #f2f7fc;
`

// bottom bars
const MeasureRow = styled.div`
  height: 37px;
  flex: none;
  display: flex;
`

const MeasureBox = styled.div`
  width: 297px;
  display: flex;
  align-items: center;
  padding: 0 0 2px 2px;
  font-size: 10.5px;
  color: #111;
  border-top: 1px solid #d8d8d8;
  border-right: 1px solid #b8b8b8;
  border-bottom: 1px solid #b8b8b8;
`

const MeasureLabel = styled.div`
  margin-left: 3px;
`

const StatusBar = styled.div`
  height: 28px;
  flex: none;
  display: flex;
  align-items: center;
  padding-left: 6px;
  gap: 16px;
  border-bottom: 1px solid #c8c8c8;
`

const StatusDivider = styled.div`
  width: 1px;
  height: 10px;
  margin-left: -1px;
  background: #888;
`

const StatusText = styled.div`
  margin: 1px 0 0 -9px;
  font-size: 12px;
  letter-spacing: 0.18px;
`

const Taskbar = styled.div`
  height: 40px;
  flex: none;
  display: flex;
  background: #141d24;
`

const StartBtn = styled.div`
  width: 48px;
  display: flex;
  align-items: center;
  justify-content: center;
`

const SearchBox = styled.div`
  width: 344px;
  display: flex;
  align-items: center;
  padding: 0 7px 0 5px;
  background: #f2f2f2;
`

const SearchText = styled.div`
  margin: -2px 0 0 5px;
  flex: 1;
  font-size: 14px;
  color: #444;
`

const TaskBtn = styled.div<{ $on?: boolean; $running?: boolean }>`
  width: 49px;
  height: 40px;
  flex: none;
  position: relative;
  display: flex;
  align-items: center;
  justify-content: center;
  background: ${(p) => (p.$on ? '#464c50' : 'transparent')};

  &::after {
    content: '';
    display: ${(p) => (p.$running ? 'block' : 'none')};
    position: absolute;
    bottom: 0;
    left: ${(p) => (p.$on ? 0 : 5)}px;
    right: ${(p) => (p.$on ? 0 : 5)}px;
    height: 2px;
    background: #76b9ed;
  }
`

const AppTile = styled.div<{ $c: string; $bg: string }>`
  width: 22px;
  height: 24px;
  display: flex;
  align-items: center;
  justify-content: center;
  font-size: 14px;
  font-weight: 600;
  letter-spacing: -0.5px;
  color: ${(p) => p.$c};
  background: ${(p) => p.$bg};
  border: 1.5px solid ${(p) => p.$c};
`

const TrayArea = styled.div`
  margin-left: auto;
  display: flex;
  align-items: center;
`

const TrayIcon = styled.div<{ $w?: number; $gap?: number }>`
  width: ${(p) => p.$w ?? 24}px;
  margin-right: ${(p) => p.$gap ?? 0}px;
  display: flex;
  justify-content: center;
`

const LangLabel = styled.div`
  width: 34px;
  text-align: center;
  font-size: 11.5px;
  color: #fff;
`

const Clock = styled.div`
  width: 74px;
  text-align: center;
  font-size: 11.5px;
  line-height: 18px;
  color: #fff;
`

const ShowDesktop = styled.div`
  width: 5px;
  height: 40px;
  margin-left: 10px;
  border-left: 1px solid #4c555c;
`

// procedural material swatches
type Tex = { base: string; freq: string; ink: number; alpha: number; seed: number; pattern?: 'bricks' | 'strips' | 'parquet'; tones?: string[] }

const WOOD: Tex[] = [
  { base: '#bf6a26', freq: '0.02 0.2', ink: 0, alpha: 0.3, seed: 1, pattern: 'parquet', tones: ['#c4722a', '#b86626'] },
  { base: '#e2d25e', freq: '0.5', ink: 1, alpha: 0.6, seed: 2 },
  { base: '#a65a2a', freq: '0.3 0.03', ink: 0, alpha: 0.3, seed: 3 },
  { base: '#a8744a', freq: '0.35 0.02', ink: 0, alpha: 0.4, seed: 4 },
  { base: '#a85a24', freq: '0.03 0.4', ink: 0, alpha: 0.25, seed: 5, pattern: 'bricks', tones: ['#cf7c30', '#7c4620', '#b46a34', '#d98a3c', '#8c5428'] },
  { base: '#e0c094', freq: '0.03 0.3', ink: 0, alpha: 0.12, seed: 6, pattern: 'bricks', tones: ['#e8cfa4', '#d8b484', '#eeb880', '#dcc498'] },
  { base: '#9a5826', freq: '0.1 0.3', ink: 0, alpha: 0.35, seed: 7, pattern: 'parquet', tones: ['#a86228', '#7e481e'] },
  { base: '#a8a47c', freq: '0.02 0.25', ink: 0, alpha: 0.35, seed: 8 },
  { base: '#eec27c', freq: '0.35', ink: 1, alpha: 0.6, seed: 9 },
  { base: '#8c8c2a', freq: '0.04', ink: 0, alpha: 0.2, seed: 10 },
  { base: '#7c4424', freq: '0.4 0.02', ink: 0, alpha: 0.2, seed: 11 },
  { base: '#c27e5e', freq: '0.02 0.1', ink: 1, alpha: 0.3, seed: 12 },
]

const WATER: Tex[] = [
  { base: '#2c3850', freq: '0.08', ink: 0, alpha: 0.5, seed: 21, pattern: 'strips', tones: ['#5a3a30'] },
  { base: '#8c8268', freq: '0.1 0.6', ink: 0, alpha: 0.35, seed: 22 },
]

const seeded = (n: number) => {
  const v = Math.sin(n * 12.9898) * 43758.5453
  return v - Math.floor(v)
}

const texturePieces = (t: Tex) => {
  const tones = t.tones ?? [t.base]
  const pieces: { x: number; y: number; w: number; h: number; fill: string }[] = []
  if (t.pattern === 'bricks') {
    for (let r = 0; r < 9; r++) {
      let x = -Math.round(seeded(r + t.seed) * 14)
      while (x < 62) {
        const w = 12 + Math.round(seeded(x + r * 7) * 14)
        pieces.push({ x, y: r * 7, w, h: 7, fill: tones[Math.floor(seeded(x * 3 + r) * tones.length)] })
        x += w
      }
    }
  }
  if (t.pattern === 'parquet') {
    for (let r = 0; r < 4; r++) {
      for (let c = 0; c < 4; c++) {
        pieces.push({ x: c * 16, y: r * 16, w: 15, h: 15, fill: tones[(r + c) % tones.length] })
      }
    }
  }
  if (t.pattern === 'strips') {
    for (let i = 0; i < 10; i++) {
      pieces.push({ x: seeded(i + 3) * 52, y: seeded(i + 31) * 54, w: 11, h: 5, fill: tones[0] })
    }
  }
  return pieces
}

const Texture = ({ t }: { t: Tex }) => (
  <svg width="62" height="62" viewBox="0 0 62 62" style={{ display: 'block' }}>
    <filter id={`tex-${t.seed}`} x="0" y="0" width="100%" height="100%">
      <feTurbulence type="fractalNoise" baseFrequency={t.freq} numOctaves={3} seed={t.seed} />
      <feColorMatrix values={`0 0 0 0 ${t.ink}  0 0 0 0 ${t.ink}  0 0 0 0 ${t.ink}  0 0 0 ${t.alpha * 3} ${-t.alpha * 1.2}`} />
    </filter>
    <rect width="62" height="62" fill={t.base} />
    {texturePieces(t).map((p, i) => (
      <rect key={i} x={p.x} y={p.y} width={p.w} height={p.h} fill={p.fill} />
    ))}
    <rect width="62" height="62" filter={`url(#tex-${t.seed})`} />
  </svg>
)

const Swatches = ({ items, height, thumb }: { items: Tex[]; height: number; thumb: number }) => (
  <SwatchPane $h={height}>
    <SwatchGrid>
      {items.map((t) => (
        <SwatchFrame key={t.seed}>
          <Texture t={t} />
        </SwatchFrame>
      ))}
    </SwatchGrid>
    <ScrollTrack $thumb={thumb} $w={16}>
      <Icon name="chevUp" size={14} />
      <Icon name="chevDown" size={14} />
    </ScrollTrack>
  </SwatchPane>
)

const MaterialNav = ({ label, rule, height }: { label: string; rule?: boolean; height: number }) => (
  <NavRow $h={height}>
    <NavBtn><Icon name="navBack" size={15} /></NavBtn>
    <NavBtn><Icon name="navNext" size={15} /></NavBtn>
    <NavBtn><Icon name="navHome" size={17} /></NavBtn>
    <NavCombo>
      <NavComboText $rule={rule}>{label}</NavComboText>
      <NavComboArrow />
    </NavCombo>
    <Icon name="details" size={16} />
  </NavRow>
)

// the model in the viewport, in screen coordinates
const Scene = () => (
  <SceneSvg viewBox="73 120 1578 853">
    <defs>
      <clipPath id="glass-clip">
        <polygon points="470,490 557,371 848,379 779,513 767,517" />
      </clipPath>
      <filter id="water" x="0" y="0" width="100%" height="100%">
        <feTurbulence type="fractalNoise" baseFrequency="0.05 0.022" numOctaves={4} seed={5} />
        <feColorMatrix values="0 0 0 0 0.6  0 0 0 0 0.9  0 0 0 0 1  0 0 0 1.8 -0.8" />
      </filter>
    </defs>
    <path d="M941 520L1480 291" stroke="#2cb52c" strokeWidth="1" />
    <path d="M73 893L536 698" stroke="#2cb52c" strokeWidth="1" />

    <g stroke="#111" strokeWidth="1.2" strokeLinejoin="round">
      <polygon points="848,379 941,367 938,742 784,868 783,798 823,769 823,640 781,662 780,513" fill="#676767" />
      <polygon points="848,365 941,367 848,379" fill="#555" />
      <polygon points="532,630 781,662 823,640 823,769 537,724" fill="#a0a0a0" strokeWidth=".8" />
      <polygon points="537,724 823,769 783,798 485,748" fill="#101010" strokeWidth=".6" />
      <polygon points="485,748 783,798 784,868 488,812" fill="#9f9f9f" />
      <polygon points="471,495 767,517 780,513 781,588 475,558" fill="#636363" strokeWidth=".8" />
    </g>

    <polygon points="475,558 545,565 543,632 474,625" fill="#ff0000" />
    <polygon points="545,565 620,572 616,640 543,632" fill="#52a800" />
    <polygon points="620,572 698,580 695,650 616,640" fill="#0000a8" />
    <polygon points="698,580 781,588 781,662 695,650" fill="#3a2800" />
    <path d="M475 558L781 588M474 625L781 662" stroke="#111" strokeWidth=".8" />

    {[
      [471, 592, 500, 595, 505, 627, 474, 625],
      [541, 600, 571, 603, 576, 637, 543, 635],
      [615, 608, 646, 612, 650, 646, 617, 643],
      [693, 617, 726, 621, 730, 657, 695, 653],
    ].map((h, i) => (
      <g key={i}>
        <polygon points={`${h[0]},${h[1]} ${h[2]},${h[3]} ${h[4]},${h[5]} ${h[6]},${h[7]}`} fill="#252525" stroke="#111" />
        <polygon points={`${h[2]},${h[3]} ${h[2] + 4},${h[3] - 1} ${h[4] + 1},${h[5] - 1} ${h[4] - 1},${h[5]}`} fill="#2a8fae" stroke="#123" strokeWidth=".5" />
        <path d={`M${h[0]} ${h[1]}L${h[2] + 4} ${h[3] - 1}`} stroke="#2a8fae" strokeWidth="1.5" />
      </g>
    ))}

    {/* glass hopper */}
    <polygon points="448,367 848,365 848,379 780,513 767,517 455,493" fill="#1f9fca" />
    <polygon points="448,367 557,371 471,490 455,493" fill="#31b6c6" />
    <polygon points="681,375 767,377 768,517 683,511" fill="#1cbfe8" />
    <polygon points="767,377 848,379 780,513 768,517" fill="#1aaedb" />
    <rect x="470" y="365" width="380" height="155" filter="url(#water)" clipPath="url(#glass-clip)" opacity=".3" />
    <polygon points="448,367 556,359 681,360 848,365 848,379 767,377 557,371" fill="#2394ac" />
    <g stroke="#0e5a70" fill="none" strokeWidth="1">
      <path d="M521 370L527 497M598 372L602 503M680 375L683 511M766 377L768 517" stroke="#0c3c4c" />
      <path d="M557 371L471 490" />
      <path d="M704 383L845 388M704 383L707 507M709 385L711 507" strokeWidth="1.2" />
      <path d="M556 359L557 371M625 360L625 373M696 361L696 375M781 363L782 377" />
      <path d="M448 367L556 359L681 360L848 365" stroke="#111" />
      <path d="M448 367L557 371L766 377L848 379M448 367L455 493" stroke="#0c4454" />
      <path d="M471 490L767 515" stroke="#2aa4bc" strokeWidth="2.5" />
    </g>
    <path d="M455 493L767 517L780 513L848 379" stroke="#111" strokeWidth="1.4" fill="none" />
    <path d="M848 365V379" stroke="#111" />
    <ellipse cx="514" cy="428" rx="11" ry="19" fill="none" stroke="#14788f" strokeWidth="1.5" />
    <ellipse cx="513" cy="428" rx="10" ry="19" fill="none" stroke="#0e5a70" />
    <ellipse cx="817" cy="443" rx="11" ry="23" fill="#1aa6c4" stroke="#0e5a70" />
    <ellipse cx="819" cy="443" rx="11" ry="23" fill="#676767" stroke="#111" strokeWidth="1.3" />
    <path d="M941 367L938 742L784 868" stroke="#111" strokeWidth="1.5" fill="none" />
  </SceneSvg>
)

type BarDef = { w: number; items?: string[]; custom?: ReactNode }

const renderItem = (raw: string, i: number) => {
  if (raw === '|') return <ToolSep key={i} />
  const on = raw.startsWith('*')
  return (
    <ToolBtn key={i} $on={on}>
      <Icon name={on ? raw.slice(1) : raw} />
    </ToolBtn>
  )
}

const MONTHS = ['J', 'F', 'M', 'A', 'M', 'J', 'J', 'A', 'S', 'O', 'N', 'D']

const ROW_ONE: BarDef[] = [
  { w: 257, items: ['iso', 'xray', '|', 'wire', 'hidden', 'shaded', '*tex', 'mono'] },
  { w: 418, items: ['newdoc', 'open', 'save', '|', 'cut', 'copy', 'paste', 'erase', '|', 'undo', 'redo', '|', 'print', '|', 'model'] },
  { w: 149, items: ['wh1', 'wh2', 'wh3', 'wh4'] },
  { w: 114, items: ['terrain', 'photo', 'pindown'] },
  { w: 113, items: ['handPoint', 'report', 'reportDim'] },
  { w: 46, items: ['globe'] },
  {
    w: 163,
    custom: (
      <LayerCombo>
        <LayerText>
          <span>✓</span>
          <span>Layer0</span>
        </LayerText>
        <LayerArrow>
          <Icon name="chevDown" size={11} />
        </LayerArrow>
      </LayerCombo>
    ),
  },
  { w: 216, items: ['houseIso', 'houseTop', 'houseFront', 'houseRight', 'houseBack', 'houseLeft'] },
  { w: 113, items: ['views', 'camPara', '*camPersp'] },
  { w: 224, items: ['solid', '|', 'solidA', 'solidB', 'solidC', 'solidD', 'solidD'] },
]

const ROW_TWO: BarDef[] = [
  { w: 147, items: ['*select', 'component', 'bucket', 'eraser'] },
  {
    w: 368,
    custom: (
      <>
        <ToolBtn><Icon name="shadow" /></ToolBtn>
        <SunSlider $left={7}>
          <SliderBar $bg="linear-gradient(90deg, #fff8e8, #fdc050 25%, #f87808 45%, #f41808 72%, #f41808 85%, #ffd0d0 93%, #fff)">
            <SliderThumb $at={123} />
          </SliderBar>
          <SliderLabels>{MONTHS.map((m, i) => <span key={i}>{m}</span>)}</SliderLabels>
        </SunSlider>
        <SunSlider $left={16}>
          <SliderBar $bg="linear-gradient(90deg, #f4f8fa, #a8c4dc 30%, #5f78f0 68%, #2a3aa8 80%, #060818)">
            <SliderThumb $at={97} />
          </SliderBar>
          <SliderTimes>
            <span>06:42 AM</span>
            <span>Noon</span>
            <span>04:46 PM</span>
          </SliderTimes>
        </SunSlider>
      </>
    ),
  },
  { w: 352, items: ['pencil', 'freehand', 'rect', 'rotrect', 'circle', 'polygon', 'arc', 'arc2', 'arc3', 'pie'] },
  { w: 217, items: ['tape', 'dimension', 'protractor', 'textTool', 'axes', 'text3d'] },
  { w: 216, items: ['move', 'push', 'rotate', 'follow', 'scale', 'offset'] },
  { w: 317, items: ['orbit', 'pan', 'zoom', 'zoomWin', 'zoomExt', 'zoomPrev', 'person', 'eye', 'walk'] },
  { w: 114, items: ['cubeRed', 'cubeBlue', 'cubeGray'] },
]

const PALETTE: { sep?: number; tools: string[] }[] = [
  { tools: ['*select', 'component', 'bucket', 'eraser'] },
  { sep: 8, tools: ['pencil', 'freehand', 'rect', 'rotrect', 'circle', 'polygon', 'arc', 'arc2', 'arc3', 'pie'] },
  { sep: 8, tools: ['move', 'push', 'rotate', 'follow', 'scale', 'offset'] },
  { sep: 6, tools: ['tape', 'dimension', 'protractor', 'textTool', 'axes', 'text3d'] },
  { sep: 9, tools: ['orbit', 'pan', 'zoom', 'zoomWin', 'zoomExt', 'zoomPrev'] },
  { sep: 8, tools: ['person', 'eye', 'walk', 'views'] },
]

const TASK_ICONS: { icon?: string; tile?: [string, string, string]; on?: boolean; running?: boolean }[] = [
  { icon: 'taskView' },
  { icon: 'edge' },
  { icon: 'chrome', running: true },
  { icon: 'redStar', running: true },
  { icon: 'explorer', running: true },
  { icon: 'scanner' },
  { icon: 'videoRed' },
  { icon: 'vlc' },
  { tile: ['Ai', '#f47c00', '#2a1400'] },
  { tile: ['Pr', '#d45ee0', '#2a0a30'] },
  { tile: ['Ae', '#b88cf0', '#1c0c3c'] },
  { icon: 'sketchTask', on: true, running: true },
  { icon: 'ubuntu' },
  { icon: 'sublime', running: true },
  { icon: 'gitApp', running: true },
]

const Bars = ({ bars }: { bars: BarDef[] }) => (
  <ToolRow>
    {bars.map((b, i) => (
      <Toolbar key={i} $w={b.w}>
        <Gripper />
        {b.custom}
        {b.items?.map(renderItem)}
      </Toolbar>
    ))}
  </ToolRow>
)

export default function App() {
  return (
    <Page>
      <GlobalStyle />
      <TitleBar>
        <Icon name="appMark" size={18} />
        <WindowTitle>Untitled - SketchUp Make 2017</WindowTitle>
        <WindowButtons>
          <WindowBtn>
            <svg width="10" height="10" viewBox="0 0 10 10"><path d="M0 5h10" stroke="#111" /></svg>
          </WindowBtn>
          <WindowBtn>
            <svg width="10" height="10" viewBox="0 0 10 10"><path d="M.5 2.5h7v7h-7zM2.5 2.5v-2h7v7h-2" stroke="#111" fill="none" /></svg>
          </WindowBtn>
          <WindowBtn>
            <svg width="11" height="11" viewBox="0 0 11 11"><path d="M.5.5l10 10M10.5.5l-10 10" stroke="#111" /></svg>
          </WindowBtn>
        </WindowButtons>
      </TitleBar>
      <MenuBar>
        {['File', 'Edit', 'View', 'Camera', 'Draw', 'Tools', 'Window', 'Extensions', 'Help'].map((m) => (
          <MenuItem key={m}>{m}</MenuItem>
        ))}
      </MenuBar>
      <Bars bars={ROW_ONE} />
      <Bars bars={ROW_TWO} />
      <ToolRowGap />
      <Main>
        <LeftDock>
          <PaletteMain>
            {PALETTE.map((g, i) => (
              <React.Fragment key={i}>
                {g.sep && <PaletteSep $h={g.sep} />}
                <PaletteGrid>{g.tools.map(renderItem)}</PaletteGrid>
              </React.Fragment>
            ))}
          </PaletteMain>
          <PaletteSide>
            <SideGripper />
            <SidePalette>
              <ToolBtn><Icon name="sandbox" /></ToolBtn>
              <PaletteSep $h={6} />
              <ToolBtn><Icon name="protractorBlack" /></ToolBtn>
              <ToolBtn><Icon name="caliper" /></ToolBtn>
              <PaletteSep $h={10} />
              <ToolBtn><Icon name="web" /></ToolBtn>
            </SidePalette>
          </PaletteSide>
        </LeftDock>

        <Viewport>
          <Sky />
          <Ground />
          <Scene />
        </Viewport>

        <RightDock>
          <TrayHeader>
            Default Tray
            <TrayHeaderSpacer />
            <Icon name="pin" size={12} />
            <TrayClose>x</TrayClose>
          </TrayHeader>
          <TrayBody>
            <TrayColumn>
              <TrayBlank />
              <CollapsedBar />
              <PanelHeader>
                <HeaderTriangle />
                <HeaderLabel>Materials</HeaderLabel>
                <HeaderClose>x</HeaderClose>
              </PanelHeader>
              <MaterialInfo>
                <PreviewBox><PreviewFace /></PreviewBox>
                <NameField>Default</NameField>
                <InfoActions>
                  <Icon name="materialCol" size={18} />
                  <Icon name="materialAdd" size={20} />
                  <MiniPreview />
                </InfoActions>
              </MaterialInfo>
              <TabRow>
                <Tab $on>Select</Tab>
                <Tab>Edit</Tab>
                <TabEnd><Icon name="eyedropper" size={22} /></TabEnd>
              </TabRow>
              <MaterialNav label="Wood" rule height={31} />
              <Swatches items={WOOD} height={249} thumb={16} />
              <RuleThick />
              <SelectHeader>Select</SelectHeader>
              <MaterialNav label="Water" height={31} />
              <Swatches items={WATER} height={130} thumb={96} />
              <CollapsedBar />
              <TrayFoot />
            </TrayColumn>
            <ScrollTrack $thumb={803} $w={17}>
              <Icon name="chevUp" size={14} />
              <Icon name="chevDown" size={14} />
            </ScrollTrack>
          </TrayBody>
        </RightDock>
      </Main>

      <MeasureRow>
        <MeasureBox>
          <Gripper />
          <MeasureLabel>Measurements</MeasureLabel>
        </MeasureBox>
      </MeasureRow>

      <StatusBar>
        <Icon name="statusPin" size={14} />
        <Icon name="statusInfo" size={14} />
        <Icon name="statusUser" size={14} />
        <StatusDivider />
        <StatusText>Select objects. Shift to extend select. Drag mouse to select multiple.</StatusText>
      </StatusBar>

      <Taskbar>
        <StartBtn><Icon name="windows" size={22} /></StartBtn>
        <SearchBox>
          <Icon name="cortana" size={30} />
          <SearchText>Type here to search</SearchText>
          <Icon name="mic" size={22} />
        </SearchBox>
        {TASK_ICONS.map((t, i) => (
          <TaskBtn key={i} $on={t.on} $running={t.running}>
            {t.icon && <Icon name={t.icon} size={t.icon === 'taskView' ? 22 : 26} />}
            {t.tile && <AppTile $c={t.tile[1]} $bg={t.tile[2]}>{t.tile[0]}</AppTile>}
          </TaskBtn>
        ))}
        <TrayArea>
          <TrayIcon $gap={12}><Icon name="people" size={20} /></TrayIcon>
          <TrayIcon><Icon name="caretUp" size={18} /></TrayIcon>
          <TrayIcon><Icon name="cloudSync" size={20} /></TrayIcon>
          <TrayIcon><Icon name="network" size={20} /></TrayIcon>
          <TrayIcon><Icon name="volume" size={20} /></TrayIcon>
          <TrayIcon><Icon name="cloudUp" size={20} /></TrayIcon>
          <LangLabel>ENG</LangLabel>
          <Clock>
            11:38
            <br />
            14-06-2019
          </Clock>
          <TrayIcon $w={36}><Icon name="notify" size={20} /></TrayIcon>
          <ShowDesktop />
        </TrayArea>
      </Taskbar>
    </Page>
  )
}
